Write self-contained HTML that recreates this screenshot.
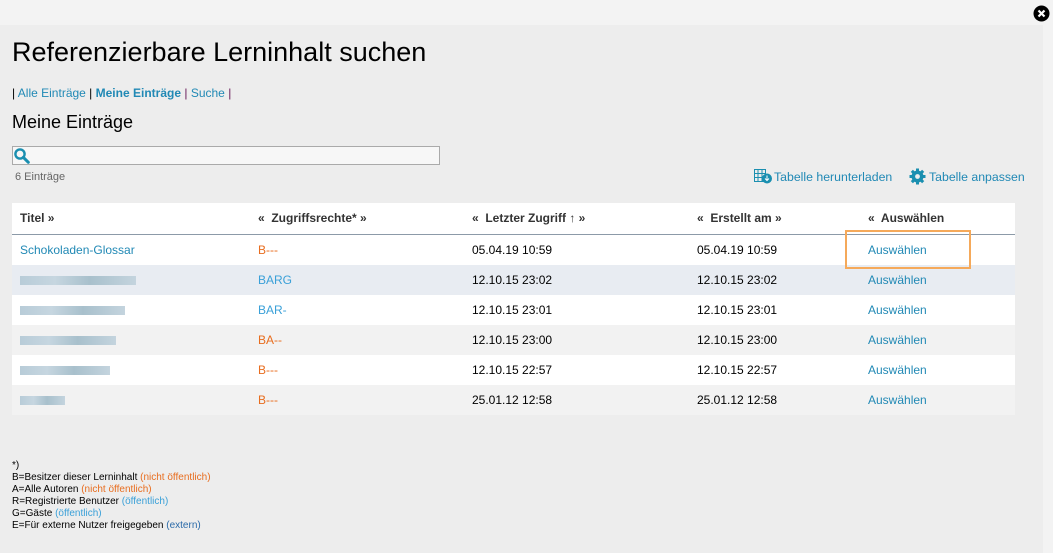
<!DOCTYPE html>
<html><head><meta charset="utf-8"><style>
body{margin:0;width:1053px;height:553px;background:#f3f3f3;font-family:"Liberation Sans",sans-serif;position:relative;overflow:hidden}
.panel{position:absolute;left:0;top:25px;width:1043px;height:528px;background:#ededed}
.a{position:absolute;white-space:nowrap}
h1{position:absolute;left:12px;top:37px;margin:0;font-weight:normal;font-size:27px;color:#000}
.lnk{color:#2189b5}
table{position:absolute;left:12px;top:203px;width:1003px;border-collapse:collapse;font-size:12px;table-layout:fixed}
th{text-align:left;font-weight:bold;color:#333;height:31px;border-bottom:1px solid #8c9aa8;background:#fff;padding:0 0 0 8px;box-sizing:border-box}
td{height:30px;padding:0 0 0 8px;color:#000}
tr.w td{background:#fff}tr.g td{background:#f2f2f2}tr.h td{background:#e8ecf2}
.o{color:#e86d1f}.b{color:#3aa0d8}
.blur{display:inline-block;height:9px;background:linear-gradient(90deg,#b8ccd8,#c6d6e0 30%,#a8c0cc 60%,#c4d4de);vertical-align:middle}
</style></head><body>
<div class="panel"></div>
<svg class="a" style="left:1033px;top:5px" width="17" height="17" viewBox="0 0 17 17"><circle cx="8.5" cy="8.5" r="8" fill="#000"/><path d="M5.5 5.5l6 6M11.5 5.5l-6 6" stroke="#fff" stroke-width="2.2"/></svg>
<h1>Referenzierbare Lerninhalt suchen</h1>
<div class="a" style="left:12px;top:86px;font-size:12px;color:#000">| <span class="lnk">Alle Einträge</span> | <b class="lnk">Meine Einträge</b> <span style="color:#6a1b5a">|</span> <span class="lnk">Suche</span> <span style="color:#6a1b5a">|</span></div>
<div class="a" style="left:12px;top:112px;font-size:18px;color:#000">Meine Einträge</div>
<div class="a" style="left:12px;top:146px;width:426px;height:17px;border:1px solid #aaa;background:#f7f7f7"></div>
<svg class="a" style="left:13px;top:147px" width="18" height="17" viewBox="0 0 18 17"><circle cx="7" cy="7" r="4.6" fill="none" stroke="#1a8fb0" stroke-width="2.4"/><path d="M10.3 10.3l5 5" stroke="#1a8fb0" stroke-width="3" stroke-linecap="round"/></svg>
<div class="a" style="left:15px;top:171px;font-size:11px;color:#666">6 Einträge</div>
<svg class="a" style="left:754px;top:169px" width="18" height="15" viewBox="0 0 18 15"><rect x="0.5" y="0.5" width="11" height="12" fill="none" stroke="#1a8fb0"/><path d="M0.5 4.5h11M0.5 8.5h11M4 0.5v12M8 0.5v12" stroke="#1a8fb0"/><circle cx="13" cy="9.5" r="5" fill="#1a8fb0"/><path d="M13 6.5v5M11 9.5l2 2 2-2" stroke="#fff" fill="none"/></svg>
<div class="a lnk" style="left:774px;top:170px;font-size:12.3px">Tabelle herunterladen</div>
<svg class="a" style="left:909px;top:168px" width="17" height="17" viewBox="0 0 17 17"><g fill="#1a8fb0"><circle cx="8.5" cy="8.5" r="6"/><rect x="7" y="0.5" width="3" height="16"/><rect x="0.5" y="7" width="16" height="3"/><rect x="7" y="0.5" width="3" height="16" transform="rotate(45 8.5 8.5)"/><rect x="7" y="0.5" width="3" height="16" transform="rotate(-45 8.5 8.5)"/></g><circle cx="8.5" cy="8.5" r="2.4" fill="#ededed"/></svg>
<div class="a lnk" style="left:929px;top:170px;font-size:12.3px">Tabelle anpassen</div>
<table>
<colgroup><col style="width:238px"><col style="width:214px"><col style="width:225px"><col style="width:171px"><col></colgroup>
<tr><th>Titel »</th><th>«&nbsp; Zugriffsrechte* »</th><th>«&nbsp; Letzter Zugriff ↑ »</th><th>«&nbsp; Erstellt am »</th><th>«&nbsp; Auswählen</th></tr>
<tr class="w"><td class="lnk">Schokoladen-Glossar</td><td class="o">B---</td><td>05.04.19 10:59</td><td>05.04.19 10:59</td><td class="lnk">Auswählen</td></tr>
<tr class="h"><td><span class="blur" style="width:116px"></span></td><td class="b">BARG</td><td>12.10.15 23:02</td><td>12.10.15 23:02</td><td class="lnk">Auswählen</td></tr>
<tr class="w"><td><span class="blur" style="width:105px"></span></td><td class="b">BAR-</td><td>12.10.15 23:01</td><td>12.10.15 23:01</td><td class="lnk">Auswählen</td></tr>
<tr class="g"><td><span class="blur" style="width:96px"></span></td><td class="o">BA--</td><td>12.10.15 23:00</td><td>12.10.15 23:00</td><td class="lnk">Auswählen</td></tr>
<tr class="w"><td><span class="blur" style="width:90px"></span></td><td class="o">B---</td><td>12.10.15 22:57</td><td>12.10.15 22:57</td><td class="lnk">Auswählen</td></tr>
<tr class="g"><td><span class="blur" style="width:45px"></span></td><td class="o">B---</td><td>25.01.12 12:58</td><td>25.01.12 12:58</td><td class="lnk">Auswählen</td></tr>
</table>
<div class="a" style="left:845px;top:230px;width:122px;height:35px;border:2px solid #f5a95a"></div>
<div class="a" style="left:12px;top:460px;font-size:10px;line-height:12px;color:#000">*)<br>B=Besitzer dieser Lerninhalt <span class="o">(nicht öffentlich)</span><br>A=Alle Autoren <span class="o">(nicht öffentlich)</span><br>R=Registrierte Benutzer <span class="b">(öffentlich)</span><br>G=Gäste <span class="b">(öffentlich)</span><br>E=Für externe Nutzer freigegeben <span style="color:#2a6aa8">(extern)</span></div>
</body></html>
